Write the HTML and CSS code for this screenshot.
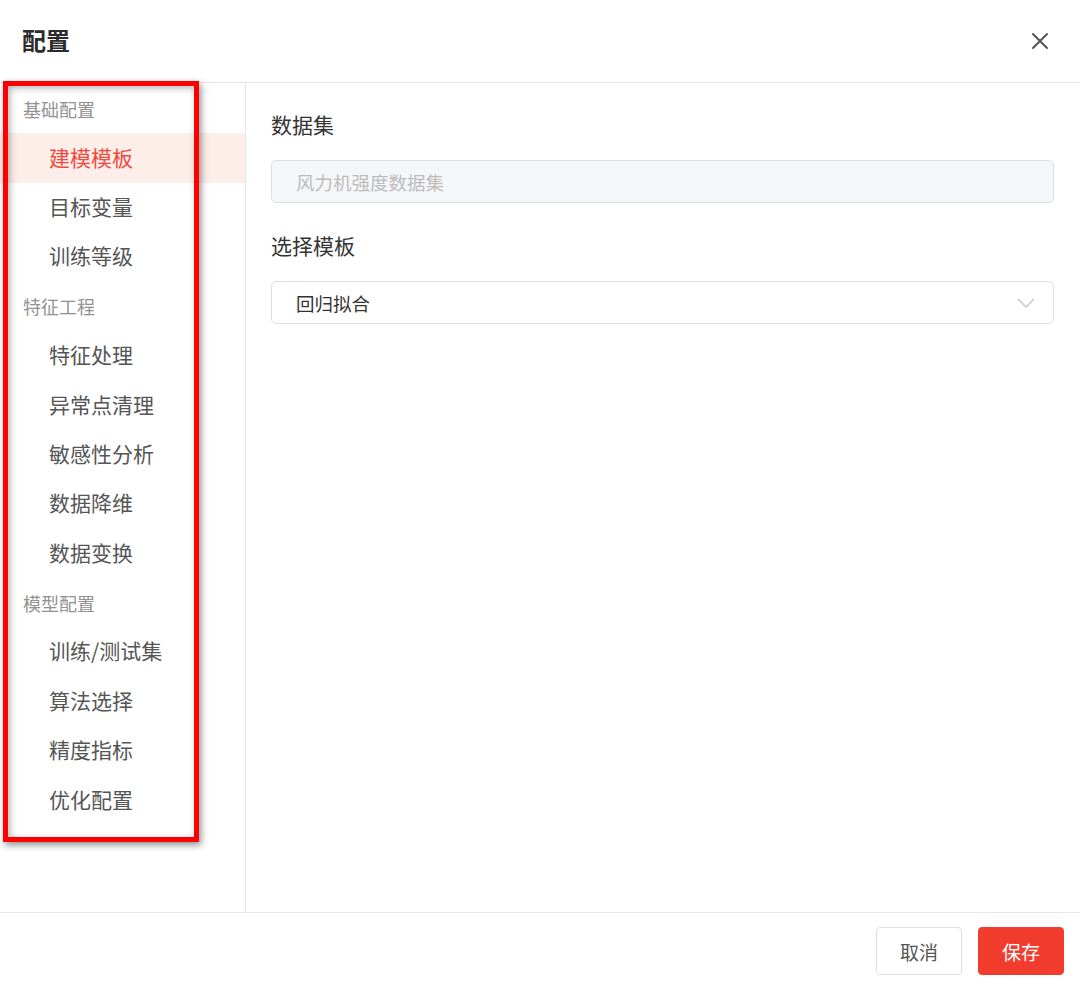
FILE: index.html
```html
<!DOCTYPE html>
<html lang="zh">
<head>
<meta charset="utf-8">
<title>配置</title>
<link rel="stylesheet" href="styles.css">
</head>
<body>
<div class="dialog">
  <header class="dlg-header">
    <h1 class="dlg-title">配置</h1>
    <button class="close-btn" aria-label="关闭">
      <svg width="18" height="18" viewBox="0 0 18 18"><path d="M2 2 L16 16 M16 2 L2 16" stroke="#555" stroke-width="2" fill="none" stroke-linecap="round"/></svg>
    </button>
  </header>
  <div class="dlg-body">
    <nav class="sidebar">
      <div class="group">基础配置</div>
      <div class="item active">建模模板</div>
      <div class="item">目标变量</div>
      <div class="item">训练等级</div>
      <div class="group">特征工程</div>
      <div class="item">特征处理</div>
      <div class="item">异常点清理</div>
      <div class="item">敏感性分析</div>
      <div class="item">数据降维</div>
      <div class="item">数据变换</div>
      <div class="group">模型配置</div>
      <div class="item">训练/测试集</div>
      <div class="item">算法选择</div>
      <div class="item">精度指标</div>
      <div class="item">优化配置</div>
    </nav>
    <main class="content">
      <div class="field-label first">数据集</div>
      <div class="input disabled">风力机强度数据集</div>
      <div class="field-label">选择模板</div>
      <div class="input select">
        <span>回归拟合</span>
        <svg class="chev" width="18" height="10" viewBox="0 0 18 10"><path d="M1 1 L9 9 L17 1" stroke="#c4c4c4" stroke-width="1.4" fill="none"/></svg>
      </div>
    </main>
  </div>
  <footer class="dlg-footer">
    <button class="btn">取消</button>
    <button class="btn primary">保存</button>
  </footer>
  <div class="highlight-box"></div>
</div>
</body>
</html>
```

FILE: styles.css
```css
* { box-sizing: border-box; }
html, body {
  margin: 0;
  padding: 0;
  background: #fff;
}
body {
  font-family: "Noto Sans CJK SC", "Noto Sans", sans-serif;
  color: #333;
}
.dialog {
  position: relative;
  width: 1080px;
  height: 989px;
  display: flex;
  flex-direction: column;
  background: #fff;
}
.dlg-header {
  height: 83px;
  flex: none;
  display: flex;
  align-items: center;
  justify-content: space-between;
  padding: 0 30px 0 22px;
  border-bottom: 1px solid #e6e6e6;
}
.dlg-title {
  margin: 0;
  font-size: 24px;
  font-weight: 700;
  color: #2b2b2b;
  line-height: 1;
  padding-bottom: 2px;
}
.close-btn {
  border: none;
  background: none;
  padding: 0;
  width: 20px;
  height: 20px;
  display: flex;
  align-items: center;
  justify-content: center;
}
.dlg-body {
  flex: 1;
  display: flex;
  min-height: 0;
}
.sidebar {
  width: 246px;
  flex: none;
  border-right: 1px solid #e6e6e6;
  padding-top: 1px;
}
.group {
  height: 49.4px;
  display: flex;
  align-items: center;
  padding-left: 23px;
  font-size: 18px;
  color: #929292;
}
.item {
  height: 49.4px;
  display: flex;
  align-items: center;
  padding-left: 49px;
  padding-bottom: 3px;
  font-size: 21px;
  color: #555;
}
.item.active {
  background: #fdeee9;
  color: #f2493d;
}
.content {
  flex: 1;
  padding: 26px 26px 0 25px;
}
.field-label {
  font-size: 21px;
  line-height: 30px;
  color: #333;
  margin-top: 27px;
  margin-bottom: 21px;
}
.field-label.first {
  margin-top: 0;
}
.input {
  height: 43px;
  border: 1px solid #dcdfe6;
  border-radius: 5px;
  padding: 0 24px;
  display: flex;
  align-items: center;
  font-size: 18.5px;
  color: #333;
}
.input.disabled {
  background: #f5f6f8;
  color: #bcbcbc;
}
.input.select {
  justify-content: space-between;
  padding-right: 18px;
}
.dlg-footer {
  height: 77px;
  flex: none;
  border-top: 1px solid #e6e6e6;
  display: flex;
  align-items: center;
  justify-content: flex-end;
  gap: 16px;
  padding: 0 16px 0 0;
}
.btn {
  width: 86px;
  height: 48px;
  border: 1px solid #dcdfe6;
  border-radius: 4px;
  background: #fff;
  font-family: inherit;
  font-size: 19px;
  color: #555;
  padding: 0;
}
.btn.primary {
  background: #f23d2e;
  border-color: #f23d2e;
  color: #fff;
}
.highlight-box {
  position: absolute;
  left: 3px;
  top: 81px;
  width: 196px;
  height: 761px;
  border: 5px solid #ff0000;
  box-shadow: 2px 3px 7px rgba(0,0,0,0.45), inset 2px 2px 7px rgba(0,0,0,0.3);
  pointer-events: none;
}
```
